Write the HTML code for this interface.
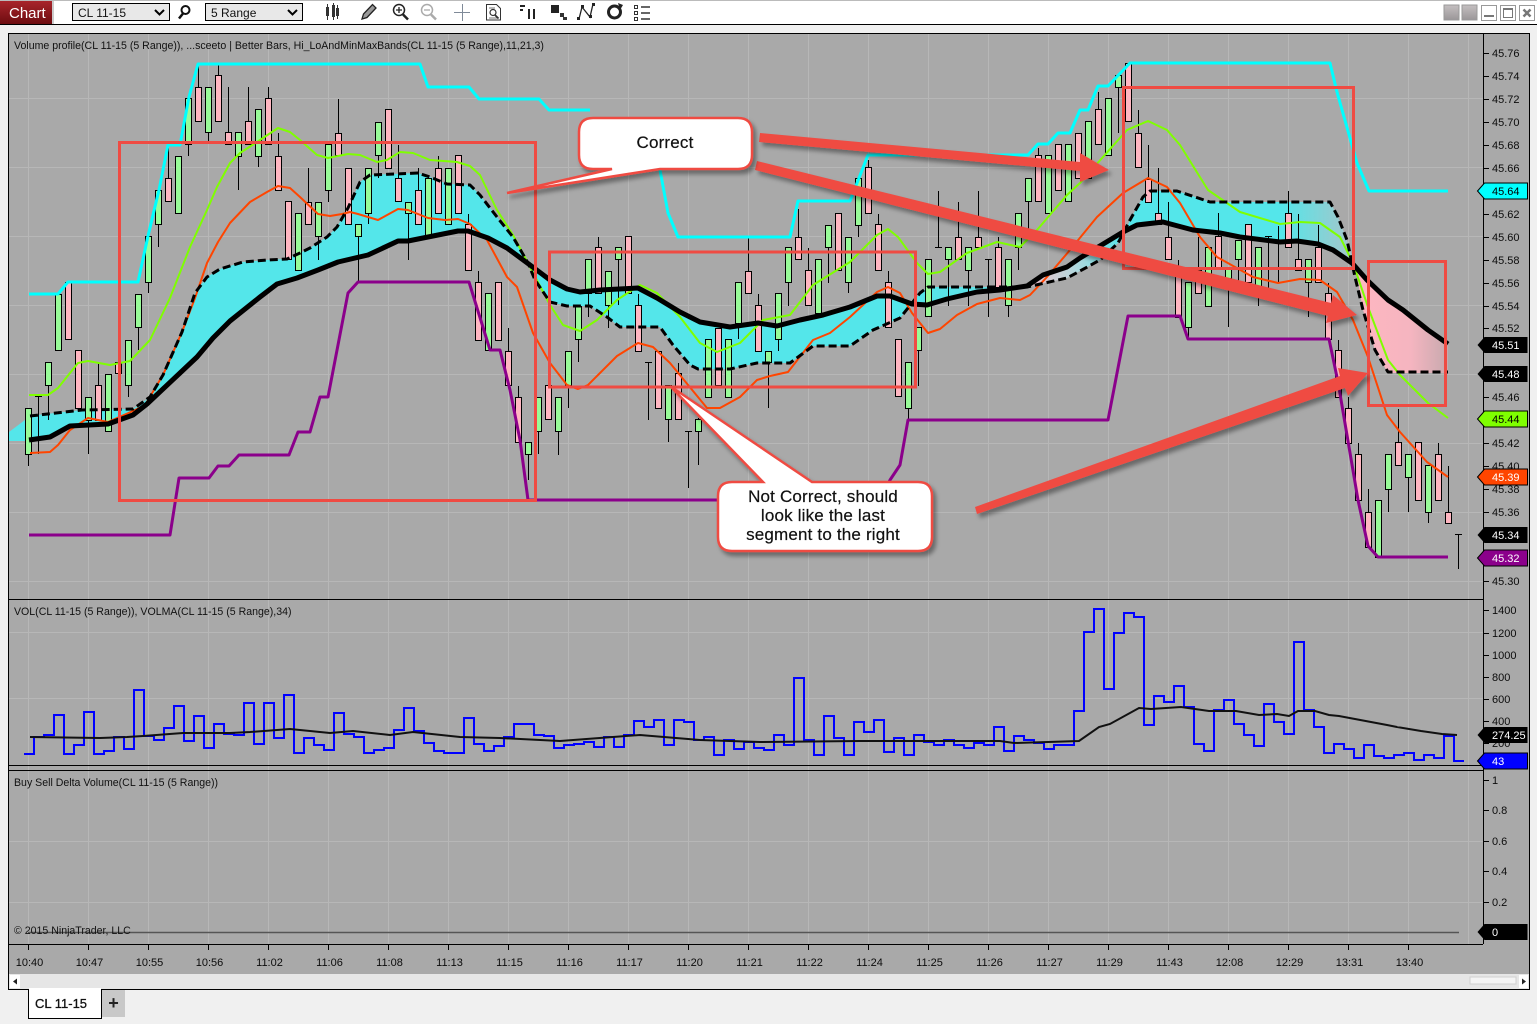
<!DOCTYPE html>
<html><head><meta charset="utf-8"><title>Chart</title>
<style>
html,body{margin:0;padding:0;background:#f0f0f0}
svg{display:block}
text{font-family:"Liberation Sans",Arial,sans-serif;fill:#111}
.ax text{font-size:11px;fill:#0c0c0c}
.tl{font-size:10.58px;fill:#111}
.w{font-size:11px;fill:#fff}
.k{font-size:11px;fill:#000}
.b{font-size:17px;letter-spacing:.18px;fill:#111;text-anchor:middle;stroke:#111;stroke-width:.2}
</style></head><body>
<svg width="1537" height="1024" viewBox="0 0 1537 1024" xmlns="http://www.w3.org/2000/svg">
<defs>
<filter id="sh" x="-10%" y="-30%" width="120%" height="160%"><feDropShadow dx="3" dy="4" stdDeviation="2.2" flood-color="#000" flood-opacity=".38"/></filter>
<linearGradient id="chartG" x1="0" y1="0" x2="0" y2="1"><stop offset="0" stop-color="#a8252b"/><stop offset="1" stop-color="#6d0c10"/></linearGradient>
<linearGradient id="btnG" x1="0" y1="0" x2="0" y2="1"><stop offset="0" stop-color="#c4bfc0"/><stop offset="1" stop-color="#9a9698"/></linearGradient>
<linearGradient id="fc" gradientUnits="userSpaceOnUse" x1="912" y1="0" x2="1027" y2="0"><stop offset="0" stop-color="#54e6ea"/><stop offset=".6" stop-color="#5ee2e6"/><stop offset="1" stop-color="#a9d2d6"/></linearGradient>
<linearGradient id="fd" gradientUnits="userSpaceOnUse" x1="1027" y1="0" x2="1125" y2="0"><stop offset="0" stop-color="#efbcc6"/><stop offset=".45" stop-color="#b9d6dc"/><stop offset="1" stop-color="#54e6ea"/></linearGradient>
<linearGradient id="fe" gradientUnits="userSpaceOnUse" x1="1125" y1="0" x2="1355" y2="0"><stop offset="0" stop-color="#54e6ea"/><stop offset=".68" stop-color="#54e6ea"/><stop offset="1" stop-color="#a9c4c8"/></linearGradient>
<linearGradient id="ff" gradientUnits="userSpaceOnUse" x1="1355" y1="0" x2="1448" y2="0"><stop offset="0" stop-color="#ffb6c1"/><stop offset=".6" stop-color="#f5b5c0"/><stop offset="1" stop-color="#c7a9ae"/></linearGradient>
</defs>

<!-- page & toolbar -->
<rect width="1537" height="1024" fill="#f0f0f0"/>
<rect width="1537" height="24" fill="#fff"/>
<rect width="1537" height="1" fill="#bbb"/>
<rect y="24" width="1537" height="1" fill="#000"/>
<rect x="52" y="1" width="2" height="23" fill="#ccc"/>
<rect y="1" width="52" height="23" fill="url(#chartG)"/>
<text x="9" y="18" style="font-size:15px;fill:#fff">Chart</text>

<rect x="72.5" y="3.5" width="97" height="17" fill="#e8e8e8" stroke="#000"/>
<text x="78" y="17" style="font-size:12px">CL 11-15</text>
<path d="M155 10l4.5 4.5L164 10" fill="none" stroke="#000" stroke-width="2"/>
<rect x="205.5" y="3.5" width="97" height="17" fill="#e8e8e8" stroke="#000"/>
<text x="211" y="17" style="font-size:12px">5 Range</text>
<path d="M288 10l4.5 4.5L297 10" fill="none" stroke="#000" stroke-width="2"/>

<!-- search -->
<circle cx="185.5" cy="10" r="4" fill="none" stroke="#111" stroke-width="2"/><path d="M183 13.5l-4 5" stroke="#111" stroke-width="2.5"/>
<!-- candles -->
<path d="M326 7h3v9h-3zM332 5h3v12h-3zM336 8h3v8h-3z" fill="#333"/><path d="M327.5 4v16M333.5 3v17M337.5 5v14" stroke="#333"/>
<!-- pencil -->
<path d="M362 19l1.5-5 9-9.500 3.500 3.500-9 9.500z" fill="#999" stroke="#222" stroke-width="1.3"/>
<!-- zoom + -->
<circle cx="399" cy="10" r="5.500" fill="#fff" stroke="#222" stroke-width="1.500"/><path d="M396 10h6M399 7v6" stroke="#222" stroke-width="1.3"/><path d="M403 14.500l5 5" stroke="#222" stroke-width="2.500"/>
<!-- zoom - -->
<circle cx="427" cy="10" r="5.500" fill="#fff" stroke="#aaa" stroke-width="1.500"/><path d="M424 10h6" stroke="#aaa" stroke-width="1.3"/><path d="M431 14.500l5 5" stroke="#aaa" stroke-width="2.500"/>
<!-- cross -->
<path d="M454 12.500h16M462.500 4v17" stroke="#7f8a98"/>
<!-- doc search -->
<path d="M486.500 4.500h10l4 4v11.500h-14z" fill="#fff" stroke="#333"/><path d="M489 8h6M489 18h9" stroke="#777"/><circle cx="493" cy="12.500" r="3" fill="none" stroke="#333" stroke-width="1.200"/><path d="M495 15l3.500 3.500" stroke="#333" stroke-width="1.800"/>
<!-- bars -->
<path d="M520 5h5v2h-5zM520 9h3v2h-3zM528 9h2v10h-2zM533 9h2v10h-2z" fill="#222"/>
<!-- squares -->
<path d="M551 5h8v8h-8z" fill="#222"/><path d="M560 13h4v4h-4zM563 17h4v3h-4z" fill="#333"/>
<!-- N -->
<path d="M579 19l3-12 8 10 3-13" fill="none" stroke="#222" stroke-width="1.3"/><path d="M577 17h3v3h-3zM581 5h3v3h-3zM589 15h3v3h-3zM592 3h3v3h-3z" fill="#222"/>
<!-- circle -->
<circle cx="614.500" cy="12" r="6" fill="none" stroke="#222" stroke-width="3"/><path d="M618 3l5 2-3 5z" fill="#222"/>
<!-- list -->
<path d="M634.500 5.500h3v3h-3zM634.500 11.500h3v3h-3zM634.500 17.500h3v3h-3z" fill="none" stroke="#333"/><path d="M641 7h9M641 13h9M641 19h9" stroke="#333" stroke-width="1.500"/>

<!-- window buttons -->
<rect x="1444" y="5" width="15" height="15" fill="url(#btnG)" stroke="#999"/>
<rect x="1462" y="5" width="15" height="15" fill="url(#btnG)" stroke="#999"/>
<rect x="1481.500" y="5.500" width="15" height="15" fill="#fff" stroke="#999"/><rect x="1484" y="15" width="10" height="2" fill="#777"/>
<rect x="1500.500" y="5.500" width="15" height="15" fill="#fff" stroke="#999"/><rect x="1503.500" y="8.500" width="9" height="9" fill="none" stroke="#777"/><rect x="1503" y="8" width="10" height="2" fill="#777"/>
<rect x="1519.500" y="5.500" width="15" height="15" fill="#fff" stroke="#999"/><path d="M1523.500 9.500l7 7M1530.500 9.500l-7 7" stroke="#777" stroke-width="2.500"/>

<!-- main panel -->
<rect x="8.500" y="33.500" width="1521" height="956" fill="#e6e6e6" stroke="#000"/>
<rect x="9" y="34" width="1520" height="940" fill="#a9a9a9"/>

<!-- grid -->
<path d="M28.500 34V944M88.500 34V944M148.500 34V944M208.500 34V944M268.500 34V944M328.500 34V944M388.500 34V944M448.500 34V944M508.500 34V944M568.500 34V944M628.500 34V944M688.500 34V944M748.500 34V944M808.500 34V944M868.500 34V944M928.500 34V944M988.500 34V944M1048.500 34V944M1108.500 34V944M1168.500 34V944M1228.500 34V944M1288.500 34V944M1348.500 34V944M1408.500 34V944M1468.500 34V944" stroke="#b7b7b7"/>
<path d="M9 98.500H1483M9 167.500H1483M9 236.500H1483M9 305.500H1483M9 374.500H1483M9 443.500H1483M9 512.500H1483M9 581.500H1483M9 632.500H1483M9 698.500H1483M9 841.500H1483M9 902.500H1483" stroke="#b7b7b7"/>

<!-- cloud fills -->
<path fill="#54e6ea" d="M9 441V432L25 420L29 416L82 410L133 409L150 397L163 375L182 332L195 293L207 277L220 269L243 262L267 260L287 259L300 253L310 248L327 237L337 227L348 208L360 182L370 175L418 173L430 177L447 184L470 185L480 195L497 217L513 237L530 265L507 248L488 238L468 231L458 231L408 241L398 241L368 255L338 262L318 270L297 278L277 284L260 297L245 309L230 321L213 338L197 357L180 373L147 404L133 415L108 424L70 426L50 437L29 441Z"/>
<path fill="#54e6ea" d="M530 265L550 280L567 289L580 292L600 290L638 288L657 298L680 312L700 322L730 327L758 323L777 326L800 320L823 315L850 307L877 296L890 296L912 304L900 318L873 330L850 346L813 346L790 363L757 363L730 369L698 369L690 365L673 345L660 327L620 327L607 317L590 306L567 306L550 302L535 280Z"/>
<path fill="url(#fc)" d="M912 304L920 293L928 287L1027 287L1000 290L977 292L947 299L927 305Z"/>
<path fill="url(#fd)" d="M1027 287L1043 275L1067 267L1080 258L1125 232L1118 243L1100 260L1080 271L1067 278Z"/>
<path fill="url(#fe)" d="M1125 232L1130 220L1143 197L1150 191L1177 191L1210 202L1330 202L1338 217L1347 240L1355 265L1333 250L1318 244L1297 241L1280 242L1240 237L1220 233L1193 230L1163 222L1137 225Z"/>
<path fill="url(#ff)" d="M1355 265L1367 280L1388 300L1403 310L1428 330L1448 344V373H1388L1375 350L1363 310Z"/>

<!-- wicks -->
<path fill="none" stroke="#000" d="M28.500 408V466M38.500 396V454M35 396.500H42M48.500 362V420M88.500 397V454M98.500 363V420M128.500 340V397M138.500 294V350M148.500 236V293M158.500 190V247M168.500 148V201M188.500 98V156M198.500 64V121M208.500 87V144M218.500 65V121M228.500 87V144M238.500 132V190M248.500 87V144M258.500 109V167M268.500 87V144M278.500 133V190M308.500 168V224M318.500 202V260M328.500 144V202M338.500 99V155M358.500 224V282M368.500 168V224M378.500 122V178M398.500 145V201M408.500 202V260M418.500 168V224M438.500 156V213M468.500 214V270M478.500 271V340M508.500 328V385M518.500 386V442M528.500 442V480M538.500 397V454M558.500 397V455M568.500 351V408M578.500 306V362M588.500 259V317M598.500 237V293M608.500 271V328M618.500 247V305M638.500 294V351M648.500 362V420M645 362.500H652M668.500 385V442M678.500 363V419M688.500 431V488M685 431.500H692M698.500 418V465M738.500 282V339M748.500 238V293M758.500 294V351M768.500 351V408M778.500 293V351M788.500 247V306M798.500 209V259M808.500 248V305M828.500 225V283M848.500 237V293M858.500 178V237M868.500 160V213M878.500 214V270M888.500 271V327M908.500 362V420M918.500 327V386M938.500 191V247M935 247.500H942M948.500 247V306M958.500 202V259M968.500 247V306M978.500 191V247M988.500 259V317M985 259.500H992M998.500 237V287M1008.500 259V317M1018.500 213V270M1028.500 178V235M1038.500 148V201M1098.500 92V144M1118.500 75V133M1138.500 110V167M1148.500 145V202M1158.500 168V224M1168.500 202V259M1178.500 260V317M1188.500 282V337M1198.500 237V293M1218.500 213V267M1228.500 268V327M1238.500 240V293M1258.500 247V306M1268.500 236V288M1265 236.500H1272M1278.500 226V283M1288.500 191V247M1298.500 214V270M1308.500 259V317M1318.500 225V282M1328.500 283V339M1338.500 340V397M1348.500 397V443M1358.500 443V500M1368.500 489V547M1388.500 454V512M1398.500 409V465M1408.500 454V512M1428.500 465V523M1438.500 443V500M1448.500 466V523M1458.500 534V569M1455 534.500H1462"/>
<!-- green bodies -->
<path fill="#98fb98" stroke="#000" d="M25.500 408.500h6v46h-6zM45.500 362.500h6v23h-6zM55.500 294.500h6v56h-6zM85.500 397.500h6v23h-6zM105.500 374.500h6v57h-6zM125.500 340.500h6v45h-6zM135.500 294.500h6v33h-6zM145.500 236.500h6v46h-6zM155.500 190.500h6v34h-6zM175.500 156.500h6v57h-6zM185.500 98.500h6v46h-6zM205.500 87.500h6v45h-6zM235.500 132.500h6v24h-6zM255.500 109.500h6v47h-6zM295.500 213.500h6v57h-6zM315.500 202.500h6v34h-6zM325.500 144.500h6v46h-6zM355.500 224.500h6v12h-6zM365.500 168.500h6v45h-6zM375.500 122.500h6v33h-6zM405.500 202.500h6v11h-6zM425.500 178.500h6v57h-6zM445.500 168.500h6v56h-6zM485.500 293.500h6v57h-6zM525.500 442.500h6v12h-6zM535.500 397.500h6v34h-6zM555.500 397.500h6v34h-6zM565.500 351.500h6v34h-6zM575.500 306.500h6v33h-6zM585.500 259.500h6v34h-6zM605.500 271.500h6v34h-6zM615.500 247.500h6v12h-6zM665.500 385.500h6v34h-6zM695.500 419.500h6v12h-6zM705.500 339.500h6v58h-6zM725.500 339.500h6v58h-6zM735.500 282.500h6v41h-6zM765.500 351.500h6v11h-6zM775.500 293.500h6v46h-6zM785.500 247.500h6v35h-6zM815.500 259.500h6v54h-6zM825.500 225.500h6v22h-6zM845.500 237.500h6v45h-6zM855.500 178.500h6v47h-6zM905.500 362.500h6v46h-6zM915.500 327.500h6v23h-6zM925.500 259.500h6v57h-6zM945.500 247.500h6v12h-6zM965.500 247.500h6v23h-6zM1005.500 259.500h6v46h-6zM1015.500 213.500h6v34h-6zM1025.500 178.500h6v23h-6zM1045.500 155.500h6v58h-6zM1065.500 144.500h6v57h-6zM1085.500 121.500h6v57h-6zM1105.500 98.500h6v57h-6zM1115.500 75.500h6v12h-6zM1185.500 282.500h6v45h-6zM1205.500 247.500h6v59h-6zM1225.500 268.500h6v10h-6zM1235.500 240.500h6v19h-6zM1255.500 247.500h6v40h-6zM1305.500 259.500h6v23h-6zM1375.500 500.500h6v57h-6zM1385.500 454.500h6v35h-6zM1405.500 454.500h6v23h-6zM1425.500 465.500h6v47h-6z"/>
<!-- pink bodies -->
<path fill="#ffb6c1" stroke="#000" d="M65.500 282.500h6v57h-6zM75.500 350.500h6v58h-6zM95.500 385.500h6v35h-6zM115.500 362.500h6v11h-6zM165.500 178.500h6v23h-6zM195.500 87.500h6v34h-6zM215.500 75.500h6v46h-6zM225.500 132.500h6v12h-6zM245.500 121.500h6v23h-6zM265.500 98.500h6v46h-6zM275.500 156.500h6v34h-6zM285.500 201.500h6v58h-6zM305.500 202.500h6v22h-6zM335.500 133.500h6v22h-6zM345.500 168.500h6v56h-6zM385.500 109.500h6v59h-6zM395.500 178.500h6v23h-6zM415.500 190.500h6v34h-6zM435.500 168.500h6v45h-6zM455.500 155.500h6v58h-6zM465.500 224.500h6v46h-6zM475.500 282.500h6v58h-6zM495.500 282.500h6v58h-6zM505.500 351.500h6v34h-6zM515.500 397.500h6v45h-6zM545.500 385.500h6v34h-6zM595.500 247.500h6v46h-6zM625.500 236.500h6v57h-6zM635.500 305.500h6v46h-6zM655.500 351.500h6v57h-6zM675.500 373.500h6v46h-6zM715.500 328.500h6v57h-6zM745.500 271.500h6v22h-6zM755.500 305.500h6v46h-6zM795.500 237.500h6v22h-6zM805.500 270.500h6v35h-6zM835.500 213.500h6v57h-6zM865.500 167.500h6v46h-6zM875.500 224.500h6v46h-6zM885.500 282.500h6v45h-6zM895.500 339.500h6v57h-6zM955.500 237.500h6v22h-6zM975.500 237.500h6v10h-6zM995.500 247.500h6v40h-6zM1035.500 155.500h6v46h-6zM1055.500 144.500h6v46h-6zM1075.500 133.500h6v45h-6zM1095.500 109.500h6v35h-6zM1125.500 63.500h6v58h-6zM1135.500 133.500h6v34h-6zM1145.500 179.500h6v23h-6zM1155.500 213.500h6v11h-6zM1165.500 237.500h6v22h-6zM1175.500 270.500h6v47h-6zM1195.500 270.500h6v23h-6zM1215.500 236.500h6v31h-6zM1245.500 224.500h6v58h-6zM1285.500 213.500h6v34h-6zM1295.500 259.500h6v11h-6zM1315.500 247.500h6v35h-6zM1325.500 293.500h6v46h-6zM1335.500 350.500h6v47h-6zM1345.500 408.500h6v35h-6zM1355.500 454.500h6v46h-6zM1365.500 512.500h6v35h-6zM1395.500 442.500h6v23h-6zM1415.500 442.500h6v58h-6zM1435.500 454.500h6v46h-6zM1445.500 512.500h6v11h-6z"/>

<!-- indicator lines -->
<g fill="none" stroke-linejoin="round">
<path stroke="#00ffff" stroke-width="3" d="M29 294H58L68 282H138L148 236L159 190L168 145H180L189 97L198 64H420L428 87H469L479 99H539L549 110H590M660 170L668 213L678 237H790L798 201H850L868 155H1028L1038 144H1048L1058 133H1070L1080 110H1088L1098 86H1108L1130 63H1330L1337 92L1357 163L1369 191H1448"/>
<path stroke="#8b008b" stroke-width="3" d="M29 535H170L179 478H209L218 466H229L239 455H289L298 432H310L320 397H328L348 293L358 282H469L490 350H500L510 390L520 440L528 500H720M880 500L890 480L900 465L908 420H1108L1128 316H1180L1188 339H1329L1338 382L1358 500L1368 546L1378 557H1448"/>
<path stroke="#ff4500" stroke-width="2" d="M30 453L50 452L58 445L70 430L88 418L108 422L133 411L145 405L163 375L182 332L195 298L207 263L218 242L230 223L250 202L267 192L278 186L290 188L300 197L318 214L330 216L342 214L350 212L358 214L378 220L398 209L408 210L428 218L445 220L458 219L470 224L487 240L507 277L517 287L533 333L550 363L567 385L578 389L588 385L617 356L638 343L653 347L670 363L707 408L720 408L740 397L757 380L770 376L788 372L813 340L830 333L850 317L877 292L888 287L900 293L912 313L928 333L940 329L957 315L977 304L1000 298L1020 300L1030 295L1047 277L1070 250L1097 217L1123 193L1148 178L1167 187L1180 203L1200 237L1217 257L1253 277L1278 283L1300 279L1320 280L1337 292L1353 320L1368 357L1387 415L1400 432L1427 462L1448 477"/>
<path stroke="#7fff00" stroke-width="2" d="M29 395L48 395L58 388L78 363L88 361L110 365L130 361L150 340L170 298L190 247L207 210L217 187L230 163L240 153L257 142L278 128L290 132L300 140L317 155L328 158L348 154L360 155L377 162L387 160L400 152L413 153L430 160L457 162L470 166L480 175L497 210L513 235L530 267L550 305L563 325L580 331L597 320L617 300L640 285L657 293L680 317L700 343L717 352L740 343L763 320L790 315L813 285L850 262L877 235L888 229L898 237L917 263L928 274L940 272L967 253L997 242L1020 247L1037 230L1067 195L1080 183L1103 157L1127 130L1148 121L1167 130L1180 145L1208 190L1240 212L1280 224L1300 222L1320 223L1340 237L1353 263L1368 307L1388 360L1400 375L1418 393L1428 403L1448 418"/>
<path stroke="#000" stroke-width="3" stroke-dasharray="8 4" d="M30 416L82 410L133 409L150 397L163 375L182 332L195 293L207 277L220 269L243 262L267 260L287 259L300 253L310 248L327 237L337 227L348 208L360 182L370 175L418 173L430 177L447 184L470 185L480 195L497 217L513 237L528 263L535 280L550 302L567 306L590 306L607 317L620 327L660 327L673 345L690 365L698 369L730 369L757 363L790 363L813 346L850 346L873 330L900 318L920 293L928 287L1027 287L1067 278L1080 271L1100 260L1118 243L1130 220L1143 197L1150 191L1177 191L1210 202L1330 202L1338 217L1347 240L1355 277L1363 310L1375 350L1388 372H1448"/>
<path stroke="#000" stroke-width="5" d="M29 440L50 437L70 426L108 424L133 415L147 404L180 373L197 357L213 338L230 321L245 309L260 297L277 284L297 278L318 270L338 262L368 255L398 241L408 241L458 231L468 231L488 238L507 248L530 265L550 280L567 289L580 292L600 290L638 288L657 298L680 312L700 322L730 327L758 323L777 326L800 320L823 315L850 307L877 296L890 296L912 304L927 305L947 299L977 292L1000 290L1027 286L1043 275L1067 267L1080 258L1123 232L1137 225L1163 222L1193 230L1220 233L1240 237L1280 242L1297 241L1318 244L1333 250L1352 263L1367 280L1388 300L1403 310L1428 330L1448 344"/>
</g>

<!-- volume -->
<path fill="none" stroke="#0000ff" stroke-width="2" d="M24 754H34V737H44V735H54V715H64V754H74V745H84V712H94V754H104V751H114V737H124V749H134V690H144V736H154V740H164V728H174V706H184V741H194V716H204V748H214V724H224V734H234V735H244V703H254V744H264V703H274V738H284V695H294V753H304V738H314V745H324V750H334V713H344V734H354V737H364V753H374V750H384V748H394V730H404V708H414V731H424V743H434V751H444V753H464V718H474V744H484V751H494V746H504V737H514V724H534V735H544V736H554V748H564V745H574V744H584V742H594V747H604V737H614V747H624V735H634V721H644V727H654V720H664V745H674V720H684V722H694V740H704V737H714V755H724V740H734V749H744V742H754V748H764V750H774V735H784V745H794V678H804V740H814V755H824V716H834V738H844V755H854V722H864V732H874V720H884V752H894V738H904V755H914V735H924V742H934V745H944V740H954V745H964V748H974V743H984V745H994V727H1004V751H1014V736H1024V740H1034V743H1044V749H1054V745H1074V711H1084V632H1094V609H1104V689H1114V633H1124V613H1134V617H1144V725H1154V696H1164V702H1174V686H1184V707H1194V744H1204V751H1214V710H1224V700H1234V724H1244V735H1254V746H1264V704H1274V722H1284V734H1294V642H1304V710H1314V727H1324V753H1334V744H1344V749H1354V758H1364V745H1374V756H1384V758H1394V755H1404V753H1414V760H1424V755H1434V758H1444V736H1454V761H1464"/>
<path fill="none" stroke="#111" stroke-width="2" d="M30 737L100 738L127 737L143 736L183 733L230 733L250 732L290 729L330 733L353 731L390 735L413 732L460 737L500 738L560 741L640 735L700 740L760 742L860 741L940 741L1000 741L1014 743L1079 741L1099 727L1110 724L1139 708L1151 709L1181 707L1209 711L1236 711L1259 715L1277 714L1289 716L1298 711L1315 711L1329 715L1339 716L1387 725L1397 727L1421 731L1442 734L1457 735"/>
<path stroke="#555" stroke-width="1.500" d="M28 932.500H1459"/>

<!-- panel separators and axes -->
<path stroke="#000" d="M9 599.500H1483M9 765.500H1483M9 770.500H1483M9 944.500H1483M1483.500 34V944"/>
<rect x="9" y="974" width="1520" height="15" fill="#e6e6e6"/>
<path stroke="#000" d="M8 989.500H1530"/>
<path d="M1484 53.500h5M1484 76.500h5M1484 99.500h5M1484 122.500h5M1484 145.500h5M1484 168.500h5M1484 191.500h5M1484 214.500h5M1484 237.500h5M1484 260.500h5M1484 283.500h5M1484 306.500h5M1484 328.500h5M1484 351.500h5M1484 374.500h5M1484 397.500h5M1484 420.500h5M1484 443.500h5M1484 466.500h5M1484 489.500h5M1484 512.500h5M1484 535.500h5M1484 558.500h5M1484 581.500h5M1484 610.500h5M1484 633.500h5M1484 655.500h5M1484 677.500h5M1484 699.500h5M1484 721.500h5M1484 743.500h5M1484 780.500h5M1484 810.500h5M1484 841.500h5M1484 871.500h5M1484 902.500h5M1484 932.500h5" stroke="#000"/>
<path d="M28.500 945v5M88.500 945v5M148.500 945v5M208.500 945v5M268.500 945v5M328.500 945v5M388.500 945v5M448.500 945v5M508.500 945v5M568.500 945v5M628.500 945v5M688.500 945v5M748.500 945v5M808.500 945v5M868.500 945v5M928.500 945v5M988.500 945v5M1048.500 945v5M1108.500 945v5M1168.500 945v5M1228.500 945v5M1288.500 945v5M1348.500 945v5M1408.500 945v5" stroke="#000"/>

<g class="ax">
<text x="1492" y="57">45.76</text><text x="1492" y="80">45.74</text><text x="1492" y="103">45.72</text><text x="1492" y="126">45.70</text><text x="1492" y="149">45.68</text><text x="1492" y="172">45.66</text><text x="1492" y="218">45.62</text><text x="1492" y="241">45.60</text><text x="1492" y="264">45.58</text><text x="1492" y="287">45.56</text><text x="1492" y="310">45.54</text><text x="1492" y="332">45.52</text><text x="1492" y="378">45.48</text><text x="1492" y="401">45.46</text><text x="1492" y="447">45.42</text><text x="1492" y="470">45.40</text><text x="1492" y="493">45.38</text><text x="1492" y="516">45.36</text><text x="1492" y="585">45.30</text>
<text x="1492" y="614">1400</text><text x="1492" y="637">1200</text><text x="1492" y="659">1000</text><text x="1492" y="681">800</text><text x="1492" y="703">600</text><text x="1492" y="725">400</text><text x="1492" y="747">200</text>
<text x="1492" y="784">1</text><text x="1492" y="814">0.8</text><text x="1492" y="845">0.6</text><text x="1492" y="875">0.4</text><text x="1492" y="906">0.2</text>
</g>
<g class="ax" text-anchor="middle">
<text x="29.500" y="966">10:40</text><text x="89.500" y="966">10:47</text><text x="149.500" y="966">10:55</text><text x="209.500" y="966">10:56</text><text x="269.500" y="966">11:02</text><text x="329.500" y="966">11:06</text><text x="389.500" y="966">11:08</text><text x="449.500" y="966">11:13</text><text x="509.500" y="966">11:15</text><text x="569.500" y="966">11:16</text><text x="629.500" y="966">11:17</text><text x="689.500" y="966">11:20</text><text x="749.500" y="966">11:21</text><text x="809.500" y="966">11:22</text><text x="869.500" y="966">11:24</text><text x="929.500" y="966">11:25</text><text x="989.500" y="966">11:26</text><text x="1049.500" y="966">11:27</text><text x="1109.500" y="966">11:29</text><text x="1169.500" y="966">11:43</text><text x="1229.500" y="966">12:08</text><text x="1289.500" y="966">12:29</text><text x="1349.500" y="966">13:31</text><text x="1409.500" y="966">13:40</text>
</g>

<!-- tags -->
<path d="M1477.500 191l7-8h43v16h-43z" fill="#00ffff" stroke="#000"/><text class="k" x="1492" y="195">45.64</text>
<path d="M1477.500 345l7-8h43v16h-43z" fill="#000"/><text class="w" x="1492" y="349">45.51</text>
<path d="M1477.500 374l7-8h43v16h-43z" fill="#000"/><text class="w" x="1492" y="378">45.48</text>
<path d="M1477.500 419l7-8h43v16h-43z" fill="#7fff00" stroke="#000"/><text class="k" x="1492" y="423">45.44</text>
<path d="M1477.500 477l7-8h43v16h-43z" fill="#ff4500" stroke="#000"/><text class="w" x="1492" y="481">45.39</text>
<path d="M1477.500 535l7-8h43v16h-43z" fill="#000"/><text class="w" x="1492" y="539">45.34</text>
<path d="M1477.500 558l7-8h43v16h-43z" fill="#8b008b" stroke="#000"/><text class="w" x="1492" y="562">45.32</text>
<path d="M1477.500 735l7-8h43v16h-43z" fill="#000"/><text class="w" x="1492" y="739">274.25</text>
<path d="M1477.500 761l7-8h43v16h-43z" fill="#0000ff" stroke="#000"/><text class="w" x="1492" y="765">43</text>
<path d="M1477.500 932l7-8h43v16h-43z" fill="#000"/><text class="w" x="1492" y="936">0</text>

<!-- panel titles -->
<text class="tl" x="14" y="49">Volume profile(CL 11-15 (5 Range)), ...sceeto | Better Bars, Hi_LoAndMinMaxBands(CL 11-15 (5 Range),11,21,3)</text>
<text class="tl" x="14" y="615">VOL(CL 11-15 (5 Range)), VOLMA(CL 11-15 (5 Range),34)</text>
<text class="tl" x="14" y="786">Buy Sell Delta Volume(CL 11-15 (5 Range))</text>
<text class="tl" x="14" y="934">© 2015 NinjaTrader, LLC</text>

<!-- annotations -->
<g fill="none" stroke="#ef4b43" stroke-width="3">
<rect x="119.500" y="142.500" width="416" height="358"/>
<rect x="549.500" y="252" width="366" height="135"/>
<rect x="1123.500" y="87.500" width="230" height="181"/>
<rect x="1368.500" y="261.500" width="77" height="144"/>
</g>
<g filter="url(#sh)" fill="#ef4b43">
<polygon points="760,133 1080,162 1080,153 1109,170 1080,182 1080,171 759,142"/>
<polygon points="757,161 1331,303 1333,295 1357,315 1326,323 1328,316 755,170"/>
<polygon points="975,507 1340,376 1338,368 1368,373 1348,396 1345,388 977,514"/>
</g>
<path filter="url(#sh)" fill="#fff" stroke="#ef4b43" stroke-width="2.500" d="M593 118H738Q752 118 752 132V155Q752 169 738 169H660L507 193L612 169H593Q579 169 579 155V132Q579 118 593 118Z"/>
<path filter="url(#sh)" fill="#fff" stroke="#ef4b43" stroke-width="2.500" d="M732 482H763L670 386L812 482H918Q932 482 932 496V537Q932 551 918 551H732Q718 551 718 537V496Q718 482 732 482Z"/>
<text class="b" x="665" y="148">Correct</text>
<text class="b" x="823" y="502">Not Correct, should</text>
<text class="b" x="823" y="521">look like the last</text>
<text class="b" x="823" y="540">segment to the right</text>

<!-- scrollbar -->
<rect x="10" y="975" width="10" height="13" fill="#fff"/>
<path d="M13 981.500l4-3v6z" fill="#222"/>
<rect x="1470" y="977" width="46" height="7" fill="#f4f4f4" stroke="#d0d0d0"/>
<rect x="1519" y="975" width="9" height="13" fill="#fff"/>
<path d="M1526 981.500l-4-3v6z" fill="#222"/>

<!-- tabs -->
<rect x="102" y="990" width="23" height="27" fill="#c8c8c8"/>
<text x="113.500" y="1009" text-anchor="middle" style="font-size:18px;font-weight:bold;fill:#222">+</text>
<path d="M28.500 989.500V1018.500H101.500V989.500" fill="#fff" stroke="#000"/>
<rect x="29" y="988" width="72" height="3" fill="#fff"/>
<text x="35" y="1008" style="font-size:13px;fill:#111;stroke:#111;stroke-width:.3">CL 11-15</text>
</svg>
</body></html>
